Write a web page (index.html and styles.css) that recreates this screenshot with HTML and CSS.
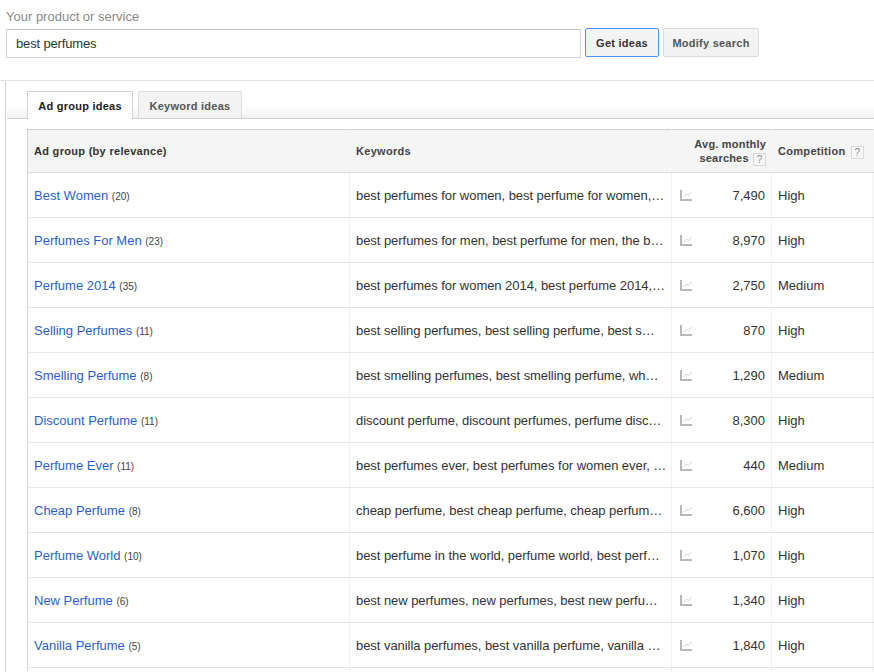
FILE: index.html
```
<!DOCTYPE html>
<html lang="en">
<head>
<meta charset="utf-8">
<title>Keyword Planner</title>
<link rel="stylesheet" href="styles.css">
</head>
<body>
<svg class="defs" width="0" height="0" aria-hidden="true"><symbol id="trend" viewBox="0 0 12 11"><path d="M0 0h2v9h10v2H0z" fill="#b8b8b8"/><path d="M3.500 7l3-3 2 1.500 3-3.500" fill="none" stroke="#d0d0d0" stroke-width="1"/></symbol></svg>
<header class="search">
  <div class="search-label">Your product or service</div>
  <div class="search-row">
    <input class="search-input" type="text" value="best perfumes">
    <button class="btn btn-primary">Get ideas</button>
    <button class="btn btn-muted">Modify search</button>
  </div>
</header>
<main class="results">
  <div class="tabs">
    <div class="tab tab-active">Ad group ideas</div>
    <div class="tab">Keyword ideas</div>
  </div>
  <table class="ideas">
    <colgroup><col class="c-group"><col class="c-keys"><col class="c-trend"><col class="c-num"><col class="c-comp"><col class="c-rest"></colgroup>
    <thead>
      <tr>
        <th>Ad group (by relevance)</th>
        <th>Keywords</th>
        <th colspan="2" class="th-avg">Avg. monthly<br>searches <span class="q q-avg">?</span></th>
        <th>Competition <span class="q q-comp">?</span></th>
        <th></th>
      </tr>
    </thead>
    <tbody>
      <tr><td><a class="group">Best Women</a> <span class="count">(20)</span></td><td class="keys">best perfumes for women, best perfume for women,…</td><td class="t"><svg class="ico"><use href="#trend"/></svg></td><td class="num">7,490</td><td>High</td><td></td></tr>
      <tr><td><a class="group">Perfumes For Men</a> <span class="count">(23)</span></td><td class="keys">best perfumes for men, best perfume for men, the b…</td><td class="t"><svg class="ico"><use href="#trend"/></svg></td><td class="num">8,970</td><td>High</td><td></td></tr>
      <tr><td><a class="group">Perfume 2014</a> <span class="count">(35)</span></td><td class="keys">best perfumes for women 2014, best perfume 2014,…</td><td class="t"><svg class="ico"><use href="#trend"/></svg></td><td class="num">2,750</td><td>Medium</td><td></td></tr>
      <tr><td><a class="group">Selling Perfumes</a> <span class="count">(11)</span></td><td class="keys">best selling perfumes, best selling perfume, best s…</td><td class="t"><svg class="ico"><use href="#trend"/></svg></td><td class="num">870</td><td>High</td><td></td></tr>
      <tr><td><a class="group">Smelling Perfume</a> <span class="count">(8)</span></td><td class="keys">best smelling perfumes, best smelling perfume, wh…</td><td class="t"><svg class="ico"><use href="#trend"/></svg></td><td class="num">1,290</td><td>Medium</td><td></td></tr>
      <tr><td><a class="group">Discount Perfume</a> <span class="count">(11)</span></td><td class="keys">discount perfume, discount perfumes, perfume disc…</td><td class="t"><svg class="ico"><use href="#trend"/></svg></td><td class="num">8,300</td><td>High</td><td></td></tr>
      <tr><td><a class="group">Perfume Ever</a> <span class="count">(11)</span></td><td class="keys">best perfumes ever, best perfumes for women ever, …</td><td class="t"><svg class="ico"><use href="#trend"/></svg></td><td class="num">440</td><td>Medium</td><td></td></tr>
      <tr><td><a class="group">Cheap Perfume</a> <span class="count">(8)</span></td><td class="keys">cheap perfume, best cheap perfume, cheap perfum…</td><td class="t"><svg class="ico"><use href="#trend"/></svg></td><td class="num">6,600</td><td>High</td><td></td></tr>
      <tr><td><a class="group">Perfume World</a> <span class="count">(10)</span></td><td class="keys">best perfume in the world, perfume world, best perf…</td><td class="t"><svg class="ico"><use href="#trend"/></svg></td><td class="num">1,070</td><td>High</td><td></td></tr>
      <tr><td><a class="group">New Perfume</a> <span class="count">(6)</span></td><td class="keys">best new perfumes, new perfumes, best new perfu…</td><td class="t"><svg class="ico"><use href="#trend"/></svg></td><td class="num">1,340</td><td>High</td><td></td></tr>
      <tr><td><a class="group">Vanilla Perfume</a> <span class="count">(5)</span></td><td class="keys">best vanilla perfumes, best vanilla perfume, vanilla …</td><td class="t"><svg class="ico"><use href="#trend"/></svg></td><td class="num">1,840</td><td>High</td><td></td></tr>
      <tr class="stub"><td></td><td></td><td colspan="2"></td><td></td><td></td></tr>
    </tbody>
  </table>
</main>
</body>
</html>
```
FILE: styles.css
```
html, body { margin: 0; height: 672px; overflow: hidden; background: #fff; }
body { font-family: "Liberation Sans", Arial, sans-serif; font-size: 13px; color: #333; }
.defs { display: block; height: 0; }

.search { height: 81px; box-sizing: border-box; padding: 9px 0 0 6px; border-bottom: 1px solid #e0e0e0; }
.search-label { font-size: 13px; line-height: 15px; color: #888; height: 20px; }
.search-row { display: flex; align-items: flex-start; gap: 4px; margin-top: -1px; }
.search-input { width: 575px; height: 29px; box-sizing: border-box; border: 1px solid #d4d4d4; border-top-color: #c0c0c0; padding: 0 0 1px 9px; margin: 1px 0 0; font: 13px "Liberation Sans", Arial, sans-serif; letter-spacing: -.15px; color: #333; outline: 0; }
.btn { height: 29px; box-sizing: border-box; padding: 0; border: 1px solid #dcdcdc; border-radius: 2px; background: linear-gradient(#f5f5f5, #f1f1f1); font: bold 11px "Liberation Sans", Arial, sans-serif; letter-spacing: .25px; color: #333; }
.btn-primary { width: 74px; border-color: #4d90fe; }
.btn-muted { width: 96px; color: #555; }

.results { margin-left: 5px; border-left: 1px solid #d0d0d0; height: 591px; box-sizing: border-box; overflow: hidden; }
.tabs { display: flex; gap: 5px; height: 38px; box-sizing: border-box; margin-left: 1px; padding: 10px 0 0 20px; border-bottom: 1px solid #d0d0d0; background: linear-gradient(#fff 24px, #f1f1f1); }
.tab { width: 104px; height: 27px; box-sizing: border-box; border: 1px solid #dcdcdc; border-bottom: 0; border-radius: 2px 2px 0 0; background: #f3f3f3; font: bold 11px/29px "Liberation Sans", Arial, sans-serif; letter-spacing: .25px; color: #555; text-align: center; }
.tab-active { width: 106px; height: 28px; background: #fff; color: #222; border-color: #d0d0d0; }

.ideas { margin: 10px 0 0 21px; width: 847px; table-layout: fixed; border-collapse: collapse; border-left: 1px solid #d0d0d0; border-top: 1px solid #d0d0d0; }
.c-group { width: 322px; } .c-keys { width: 322px; } .c-trend { width: 40px; } .c-num { width: 60px; } .c-comp { width: 101px; } .c-rest { width: 2px; }
.ideas th { height: 42px; background: #f5f5f5; border-bottom: 1px solid #dcdcdc; border-left: 1px solid #f5f5f5; padding: 0 6px; font: bold 11px/14px "Liberation Sans", Arial, sans-serif; letter-spacing: .3px; color: #444; text-align: left; }
.ideas th:first-child { color: #333; border-left: 0; }
.ideas .th-avg { text-align: right; letter-spacing: .2px; padding-right: 5px; }
.ideas td { height: 44px; padding: 0 6px; border-bottom: 1px solid #e6e6e6; border-left: 1px solid #f0f0f0; font-size: 13px; color: #333; white-space: nowrap; overflow: hidden; }
.ideas td:first-child { border-left: 0; }
.ideas td.keys { letter-spacing: -.05px; }
.ideas td.t { padding: 0 0 0 8px; }
.ideas td.num { text-align: right; border-left: 0; }
.ideas .stub td { height: 3px; border-bottom: 0; }
.group { color: #2a5fd0; font-size: 13px; }
.count { font-size: 10px; color: #444; }
.ico { width: 12px; height: 11px; display: block; }
.q { display: inline-block; width: 11px; height: 11px; border: 1px solid #d8d8d8; background: #f7f7f7; color: #888; font-size: 10px; line-height: 11px; font-weight: normal; text-align: center; letter-spacing: 0; vertical-align: -1px; }
.q-avg { margin-left: 1px; }
.q-comp { margin-left: 2px; }
```
